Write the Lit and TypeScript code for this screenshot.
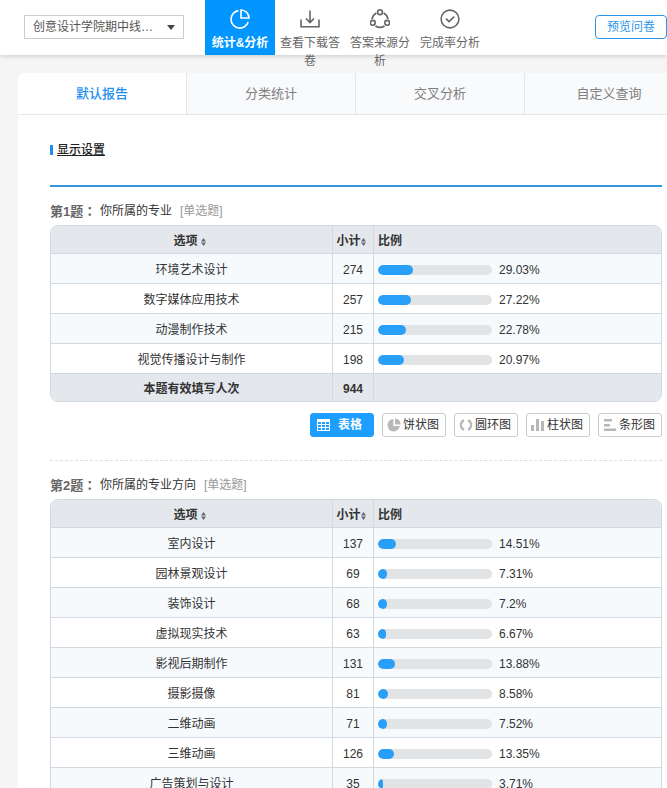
import { LitElement, html, css, svg, nothing } from "lit";
import { customElement, property, state } from "lit/decorators.js";
import { classMap } from "lit/directives/class-map.js";

interface Row {
  label: string;
  count: number;
  percent: number;
}

interface Question {
  no: number;
  title: string;
  rows: Row[];
  total?: number;
}

const questions: Question[] = [
  {
    no: 1,
    title: "你所属的专业",
    rows: [
      { label: "环境艺术设计", count: 274, percent: 29.03 },
      { label: "数字媒体应用技术", count: 257, percent: 27.22 },
      { label: "动漫制作技术", count: 215, percent: 22.78 },
      { label: "视觉传播设计与制作", count: 198, percent: 20.97 },
    ],
    total: 944,
  },
  {
    no: 2,
    title: "你所属的专业方向",
    rows: [
      { label: "室内设计", count: 137, percent: 14.51 },
      { label: "园林景观设计", count: 69, percent: 7.31 },
      { label: "装饰设计", count: 68, percent: 7.2 },
      { label: "虚拟现实技术", count: 63, percent: 6.67 },
      { label: "影视后期制作", count: 131, percent: 13.88 },
      { label: "摄影摄像", count: 81, percent: 8.58 },
      { label: "二维动画", count: 71, percent: 7.52 },
      { label: "三维动画", count: 126, percent: 13.35 },
      { label: "广告策划与设计", count: 35, percent: 3.71 },
    ],
  },
];

const navItems = [
  {
    label: "统计&分析",
    icon: svg`<path d="M8.5 1.6A8.8 8.8 0 1 0 18.2 13"/><path d="M11 1v8h8A8 8 0 0 0 11 1z"/>`,
  },
  {
    label: "查看下载答卷",
    icon: svg`<path d="M1 10.5v7.3h18v-7.3"/><path d="M10 1.5v12M6 9.5l4 4 4-4"/>`,
  },
  {
    label: "答案来源分析",
    icon: svg`<circle cx="10" cy="3.2" r="2.4"/><circle cx="2.8" cy="13.8" r="2.4"/><circle cx="17.2" cy="13.8" r="2.4"/><path d="M6.4 4A8.4 8.4 0 0 0 2 10M13.6 4A8.4 8.4 0 0 1 18 10M5.5 17a8.4 8.4 0 0 0 9 0"/>`,
  },
  {
    label: "完成率分析",
    icon: svg`<circle cx="10" cy="10" r="8.9"/><path d="M6 9.6l3 3 5.2-5"/>`,
  },
];

const tabs = ["默认报告", "分类统计", "交叉分析", "自定义查询"];

const charts = [
  {
    label: "表格",
    icon: svg`<path fill="currentColor" fill-rule="evenodd" d="M1 1h13v12H1zM2 4v2h3V4zm4 0v2h3V4zm4 0v2h3V4zM2 7v2h3V7zm4 0v2h3V7zm4 0v2h3V7zM2 10v2h3v-2zm4 0v2h3v-2zm4 0v2h3v-2z"/>`,
  },
  {
    label: "饼状图",
    icon: svg`<path fill="currentColor" d="M6.4 1A6.2 6.2 0 1 0 12.8 8H6.4z"/><path fill="currentColor" d="M8 .6V6.4h5.6A5.8 5.8 0 0 0 8 .6z"/>`,
  },
  {
    label: "圆环图",
    icon: svg`<g fill="none" stroke="currentColor" stroke-width="2.4"><path d="M5 2.2A5.2 5.2 0 0 0 1.9 6M1.9 8A5.2 5.2 0 0 0 5 11.8M9 2.2A5.2 5.2 0 0 1 12.1 6M12.1 8A5.2 5.2 0 0 1 9 11.8"/><path stroke-width="2" d="M1.9 5v4M12.1 5v4"/></g>`,
  },
  {
    label: "柱状图",
    icon: svg`<path fill="currentColor" d="M0 7h3v6H0zM5 1h3v12H5zM10 3h3v10h-3z"/>`,
  },
  {
    label: "条形图",
    icon: svg`<path fill="currentColor" d="M1 1h8v2H1zM1 6h6v2H1zM1 11h12v2H1z"/><path fill="currentColor" opacity=".5" d="M1 3h8v1H1zM1 8h6v1H1zM1 10h12v1H1z"/>`,
  },
];

const sans = css`"Liberation Sans", "Noto Sans CJK SC", sans-serif`;

@customElement("question-report")
export class QuestionReport extends LitElement {
  @property({ attribute: false }) question!: Question;
  @state() private chart = 0;

  static styles = css`
    :host {
      display: block;
      font: 12px/18px ${sans};
      color: #333;
    }
    .title {
      display: flex;
      align-items: center;
      height: 20px;
      margin: 0 0 4px;
      font-size: 12px;
      font-weight: 400;
    }
    .no {
      width: 50px;
      font-size: 13px;
      font-weight: 700;
      color: #666;
    }
    .colon {
      font-family: "Noto Sans CJK TC", sans-serif;
    }
    .kind {
      margin-left: 8px;
      color: #999;
    }
    .frame {
      border: 1px solid #d3d9e0;
      border-radius: 8px;
      overflow: hidden;
    }
    table {
      width: 100%;
      table-layout: fixed;
      border-collapse: separate;
      border-spacing: 0;
    }
    .col-count {
      width: 41px;
    }
    .col-ratio {
      width: 288px;
    }
    th,
    td {
      box-sizing: border-box;
      height: 30px;
      padding: 2px 0 0;
      border-bottom: 1px solid #d3d9e0;
      text-align: center;
      white-space: nowrap;
    }
    th + th,
    td + td {
      border-left: 1px solid #d3d9e0;
    }
    th {
      height: 28px;
    }
    tfoot td {
      height: 27px;
      border-bottom: 0;
      font-weight: 700;
    }
    thead,
    tfoot {
      background: #e4e7ec;
    }
    tbody tr:nth-child(odd) {
      background: #f6fafd;
    }
    .sort {
      padding: 0 4px 0 0;
      border: 0;
      background: none;
      font: inherit;
      color: inherit;
    }
    .sort svg {
      width: 5px;
      height: 8px;
      vertical-align: -1px;
      fill: #667;
    }
    .wide svg {
      margin-left: 3px;
    }
    th.ratio {
      padding-left: 4px;
      text-align: left;
    }
    .meter {
      display: flex;
      align-items: center;
      gap: 7px;
      padding-left: 4px;
    }
    .track {
      width: 114px;
      height: 10px;
      border-radius: 5px;
      background: #e2e3e5;
      overflow: hidden;
    }
    .fill {
      height: 100%;
      border-radius: 5px;
      background: #28a0fa;
    }
    .charts {
      display: flex;
      justify-content: flex-end;
      gap: 8px;
      margin: 11px 0 23px;
    }
    .chart {
      display: flex;
      align-items: center;
      justify-content: space-between;
      box-sizing: border-box;
      width: 64px;
      height: 24px;
      padding: 0 6px 0 4px;
      border: 1px solid #ccc;
      border-radius: 3px;
      background: #fff;
      font: inherit;
      color: #333;
    }
    .chart svg {
      width: 14px;
      height: 14px;
      color: #b8b8b8;
    }
    .chart.on {
      padding: 0 11px 0 5px;
      border-color: #1e9fff;
      background: #1e9fff;
      color: #fff;
      font-weight: 700;
    }
    .chart.on svg {
      color: #fff;
    }
  `;

  private sortIcon() {
    return html`<svg viewBox="0 0 5 8" aria-hidden="true"><path d="M2.5 0L5 3.4H0zM2.5 8L0 4.6h5z" /></svg>`;
  }

  render() {
    const q = this.question;
    return html`
      <h2 class="title">
        <span class="no">第${q.no}题<span class="colon" lang="zh-TW">：</span></span><span>${q.title}</span><span class="kind">[单选题]</span>
      </h2>
      <div class="frame">
        <table>
          <colgroup>
            <col />
            <col class="col-count" />
            <col class="col-ratio" />
          </colgroup>
          <thead>
            <tr>
              <th><button class="sort wide">选项${this.sortIcon()}</button></th>
              <th><button class="sort">小计${this.sortIcon()}</button></th>
              <th class="ratio">比例</th>
            </tr>
          </thead>
          <tbody>
            ${q.rows.map(
              (r) => html`<tr>
                <td>${r.label}</td>
                <td>${r.count}</td>
                <td>
                  <div class="meter">
                    <div class="track"><div class="fill" style="width:${Math.round(r.percent * 1.22)}px"></div></div>
                    <span>${r.percent}%</span>
                  </div>
                </td>
              </tr>`
            )}
          </tbody>
          ${q.total
            ? html`<tfoot>
                <tr>
                  <td>本题有效填写人次</td>
                  <td>${q.total}</td>
                  <td></td>
                </tr>
              </tfoot>`
            : nothing}
        </table>
      </div>
      ${q.total
        ? html`<div class="charts">
            ${charts.map(
              (c, i) => html`<button
                class=${classMap({ chart: true, on: i === this.chart })}
                @click=${() => (this.chart = i)}
              >
                <svg viewBox="0 0 14 14" aria-hidden="true">${c.icon}</svg>${c.label}
              </button>`
            )}
          </div>`
        : nothing}
    `;
  }
}

@customElement("app-root")
export class AppRoot extends LitElement {
  @state() private tab = 0;

  static styles = css`
    :host {
      display: flex;
      flex-direction: column;
      height: 100vh;
      overflow: hidden;
      background: #f5f5f5;
      font: 12px/18px ${sans};
      color: #333;
    }
    .top {
      position: relative;
      z-index: 1;
      display: flex;
      flex: none;
      align-items: flex-start;
      height: 55px;
      padding-left: 24px;
      background: #fff;
      box-shadow: 0 1px 5px rgba(0, 0, 0, 0.18);
    }
    .picker {
      position: relative;
      width: 160px;
      margin: 15px 21px 0 0;
    }
    .picker select {
      appearance: none;
      box-sizing: border-box;
      width: 100%;
      height: 24px;
      padding: 0 28px 0 8px;
      border: 1px solid #ccc;
      border-radius: 0;
      background: #fff;
      font: inherit;
      color: #555;
      text-overflow: ellipsis;
    }
    .picker::after {
      content: "";
      position: absolute;
      top: 10px;
      right: 9px;
      border: 4px solid transparent;
      border-top: 5px solid #444;
      border-bottom: 0;
      pointer-events: none;
    }
    nav {
      display: flex;
    }
    .nav {
      display: block;
      box-sizing: border-box;
      width: 70px;
      height: 55px;
      padding: 9px 5px 0;
      text-align: center;
      text-decoration: none;
      color: #666;
    }
    .nav svg {
      display: block;
      width: 20px;
      height: 20px;
      margin: 0 auto 5px;
      fill: none;
      stroke: currentColor;
      stroke-width: 1.6;
    }
    .nav.on {
      background: #0095ff;
      color: #fff;
      font-weight: 700;
    }
    .preview {
      width: 72px;
      height: 24px;
      margin: 15px 0 0 auto;
      padding: 0;
      border: 1px solid #2b95e9;
      border-radius: 4px;
      background: #fff;
      font: inherit;
      color: #2b95e9;
    }
    main {
      flex: 1;
      min-height: 0;
      padding: 18px 0 0 18px;
      overflow: hidden;
    }
    .panel {
      border-radius: 6px 0 0 0;
      background: #fff;
      overflow: hidden;
    }
    .tabs {
      display: flex;
      border-bottom: 1px solid #e4e6e9;
    }
    .tab {
      flex: 1 0 169px;
      box-sizing: border-box;
      height: 41px;
      padding: 0;
      border: 0;
      border-right: 1px solid #e4e6e9;
      background: #f9fafc;
      font: inherit;
      font-size: 13px;
      color: #808080;
    }
    .tab.on {
      background: #fff;
      color: #1e8fee;
      font-weight: 500;
    }
    .body {
      padding: 26px 5px 0 32px;
    }
    .settings {
      display: flex;
      align-items: center;
      gap: 4px;
      height: 18px;
      padding-bottom: 26px;
      border-bottom: 2px solid #3596d9;
    }
    .settings::before {
      content: "";
      width: 3px;
      height: 10px;
      background: #1e8fee;
    }
    .settings a {
      color: #222;
      font-weight: 500;
      text-decoration: underline;
    }
    question-report {
      padding-top: 14px;
    }
    question-report + question-report {
      border-top: 1px dashed #ddd;
    }
  `;

  render() {
    return html`
      <header class="top">
        <div class="picker">
          <select aria-label="问卷">
            <option>创意设计学院期中线…</option>
          </select>
        </div>
        <nav>
          ${navItems.map(
            (n, i) => html`<a href="#" class=${classMap({ nav: true, on: i === 0 })}>
              <svg viewBox="0 0 20 20" aria-hidden="true">${n.icon}</svg>${n.label}
            </a>`
          )}
        </nav>
        <button class="preview">预览问卷</button>
      </header>
      <main>
        <div class="panel">
          <div class="tabs" role="tablist">
            ${tabs.map(
              (t, i) => html`<button
                role="tab"
                aria-selected=${i === this.tab ? "true" : "false"}
                class=${classMap({ tab: true, on: i === this.tab })}
                @click=${() => (this.tab = i)}
              >
                ${t}
              </button>`
            )}
          </div>
          <div class="body">
            <div class="settings"><a href="#">显示设置</a></div>
            ${questions.map((q) => html`<question-report .question=${q}></question-report>`)}
          </div>
        </div>
      </main>
    `;
  }
}
